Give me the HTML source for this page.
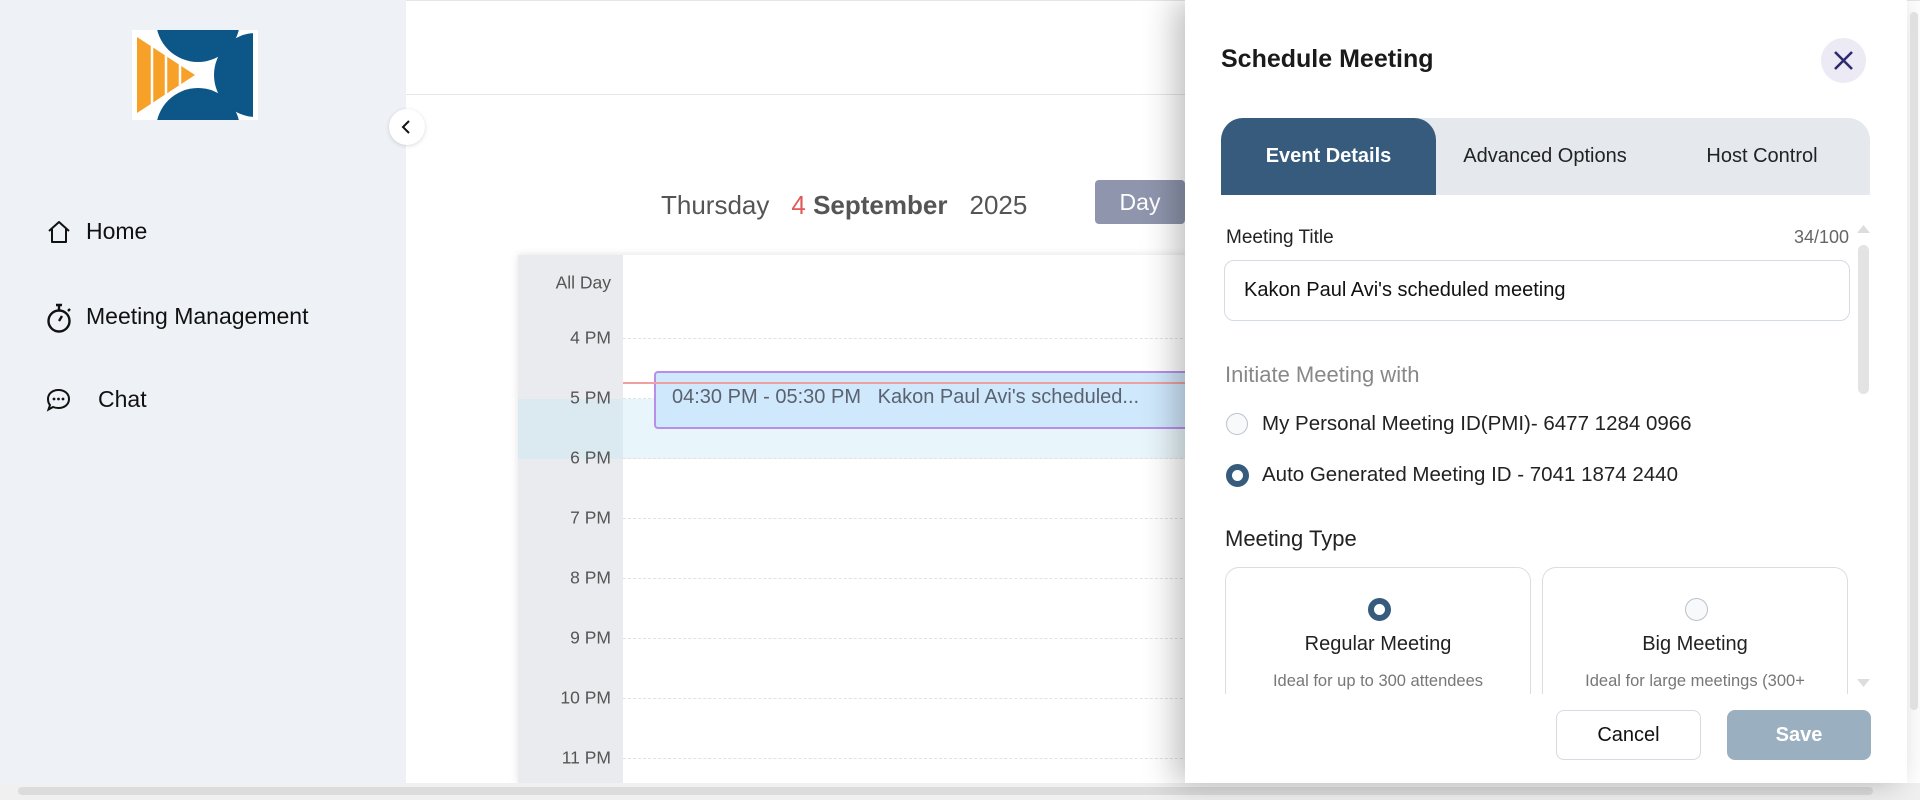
<!DOCTYPE html>
<html><head><meta charset="utf-8"><style>
*{box-sizing:border-box;margin:0;padding:0}
body{width:1920px;height:800px;overflow:hidden;background:#fff;font-family:"Liberation Sans",sans-serif;position:relative;color:#1a1a1a}
.abs{position:absolute}
.side{left:0;top:0;width:406px;height:800px;background:#eef1f5}
.nav{position:absolute;font-size:23px;color:#111;line-height:1}
.tl{position:absolute;right:0;width:105px;text-align:right;padding-right:12px;font-size:17.5px;color:#555;transform:translateY(-50%)}
.hl{position:absolute;left:105px;right:0;border-top:1px dashed #e2e2e2}
</style></head><body>
<div class="abs side"></div>
<svg class="abs" style="left:132px;top:30px" width="126" height="90" viewBox="0 0 126 90">
<rect width="126" height="90" fill="#fff"/>
<defs><clipPath id="c"><rect x="0" y="0" width="121" height="90"/></clipPath>
<clipPath id="t"><path d="M5 7 L5 83 L63 45Z"/></clipPath></defs>
<g clip-path="url(#c)" fill="#0c5688">
<circle cx="66" cy="-10" r="42"/><circle cx="66" cy="100" r="42"/>
<circle cx="124" cy="45" r="42"/>
</g>
<path d="M5 7 L5 83 L63 45Z" fill="#f7a128"/>
<g clip-path="url(#t)" stroke="#fff" stroke-width="2.5"><line x1="20" y1="0" x2="20" y2="90"/><line x1="34" y1="0" x2="34" y2="90"/><line x1="48" y1="0" x2="48" y2="90"/></g>
</svg>
<svg class="abs" style="left:47px;top:220px" width="24" height="24" viewBox="0 0 24 24" fill="none" stroke="#111" stroke-width="2" stroke-linejoin="round"><path d="M2 11 L12 2 L22 11 M5 9 V22 H19 V9"/></svg>
<div class="nav" style="left:86px;top:220px">Home</div>
<svg class="abs" style="left:46px;top:303px" width="26" height="30" viewBox="0 0 26 30" fill="none" stroke="#111" stroke-width="2.4"><circle cx="13" cy="18" r="10.5"/><path d="M10 2 H16 M13 2 V7 M13 18 L16 13 M22 8 L24 6"/></svg>
<div class="nav" style="left:86px;top:305px">Meeting Management</div>
<svg class="abs" style="left:46px;top:388px" width="25" height="24" viewBox="0 0 25 24" fill="none" stroke="#111" stroke-width="2"><path d="M12.5 2 C19 2 23 6 23 11 C23 16 19 20 12.5 20 C10 20 8.5 19.6 7 19 L2.5 21.5 L4 17 C2.5 15.4 2 13.4 2 11 C2 6 6 2 12.5 2Z"/><g fill="#111" stroke="none"><circle cx="8" cy="11" r="1.4"/><circle cx="12.5" cy="11" r="1.4"/><circle cx="17" cy="11" r="1.4"/></g></svg>
<div class="nav" style="left:98px;top:388px">Chat</div>

<div class="abs" style="left:406px;top:0;width:1514px;height:1px;background:#e6e6e6"></div>
<div class="abs" style="left:406px;top:94px;width:800px;height:1px;background:#e6e6e6"></div>
<div class="abs" style="left:389px;top:109px;width:36px;height:36px;border-radius:50%;background:#fff;box-shadow:0 1px 4px rgba(0,0,0,.15)"></div>
<svg class="abs" style="left:399px;top:119px" width="16" height="16" viewBox="0 0 16 16" fill="none" stroke="#111" stroke-width="2"><path d="M10 2 L4 8 L10 14"/></svg>

<div class="abs" style="left:661px;top:190px;font-size:26px;color:#555;white-space:nowrap">Thursday<span style="color:#e05a5a;margin-left:22px">4</span> <b style="color:#555">September</b><span style="margin-left:22px">2025</span></div>
<div class="abs" style="left:1095px;top:180px;width:90px;height:44px;background:#8e95ad;border-radius:4px;color:#fff;font-size:23px;text-align:center;line-height:44px">Day</div>

<div class="abs" style="left:518px;top:255px;width:700px;height:528px;background:#fff;box-shadow:0 0 8px rgba(0,0,0,.12)">
 <div class="abs" style="left:0;top:0;width:105px;height:528px;background:#e9ebee"></div>
 <div class="abs" style="left:0;top:144px;width:700px;height:60px;background:#e8f5fa"></div>
 <div class="abs" style="left:0;top:144px;width:105px;height:60px;background:#dbe9f0"></div>
 <div class="abs" style="left:105px;top:0;width:595px;height:45px;background:#fff"></div>
 <div class="tl" style="left:0;top:28px">All Day</div>
 <div class="hl" style="top:83px"></div><div class="tl" style="left:0;top:83px">4 PM</div>
 <div class="hl" style="top:143px"></div><div class="tl" style="left:0;top:143px">5 PM</div>
 <div class="hl" style="top:203px"></div><div class="tl" style="left:0;top:203px">6 PM</div>
 <div class="hl" style="top:263px"></div><div class="tl" style="left:0;top:263px">7 PM</div>
 <div class="hl" style="top:323px"></div><div class="tl" style="left:0;top:323px">8 PM</div>
 <div class="hl" style="top:383px"></div><div class="tl" style="left:0;top:383px">9 PM</div>
 <div class="hl" style="top:443px"></div><div class="tl" style="left:0;top:443px">10 PM</div>
 <div class="hl" style="top:503px"></div><div class="tl" style="left:0;top:503px">11 PM</div>
 <div class="abs" style="left:136px;top:116px;width:600px;height:58px;background:#cfe8fc;border:2px solid #b98ee8;border-radius:4px"></div>
 <div class="abs" style="left:105px;top:127px;width:600px;height:2px;background:#f0a0a0"></div>
 <div class="abs" style="left:154px;top:131px;font-size:20px;color:#5a6270;white-space:nowrap">04:30 PM - 05:30 PM &nbsp; Kakon Paul Avi's scheduled...</div>
</div>
<div class="abs" style="left:0;top:783px;width:1920px;height:17px;background:#f0f0f0"></div>
<div class="abs" style="left:18px;top:787px;width:1855px;height:8px;background:#dcdcdc;border-radius:4px"></div>

<div class="abs" style="left:1185px;top:0;width:722px;height:783px;background:#fff;box-shadow:-10px 0 30px rgba(0,0,0,.25)"></div>
<div class="abs" style="left:1221px;top:45px;font-size:25px;font-weight:bold;color:#1a1a1a">Schedule Meeting</div>
<div class="abs" style="left:1821px;top:38px;width:45px;height:45px;border-radius:50%;background:#ecebf5"></div>
<svg class="abs" style="left:1833px;top:50px" width="21" height="21" viewBox="0 0 21 21" stroke="#2d2a6e" stroke-width="2.6"><path d="M2 2 L19 19 M19 2 L2 19"/></svg>
<div class="abs" style="left:1221px;top:118px;width:649px;height:77px;background:#e5e9ed;border-radius:22px 22px 0 0"></div>
<div class="abs" style="left:1221px;top:118px;width:215px;height:77px;background:#365b7d;border-radius:22px 22px 0 0;color:#fff;font-weight:bold;font-size:20px;text-align:center;line-height:77px">Event Details</div>
<div class="abs" style="left:1436px;top:118px;width:218px;font-size:20px;text-align:center;line-height:77px;color:#222">Advanced Options</div>
<div class="abs" style="left:1654px;top:118px;width:216px;font-size:20px;text-align:center;line-height:77px;color:#222">Host Control</div>
<div class="abs" style="left:1226px;top:227px;font-size:19px;color:#222">Meeting Title</div>
<div class="abs" style="left:1760px;top:227px;width:89px;text-align:right;font-size:18px;color:#666">34/100</div>
<div class="abs" style="left:1224px;top:260px;width:626px;height:61px;border:1px solid #d5dbe3;border-radius:10px;font-size:20px;line-height:59px;padding-left:19px;color:#111">Kakon Paul Avi's scheduled meeting</div>
<div class="abs" style="left:1858px;top:245px;width:11px;height:149px;background:#e3e3e3;border-radius:6px"></div>
<svg class="abs" style="left:1857px;top:224px" width="13" height="10"><path d="M0 9 L6.5 1 L13 9Z" fill="#ddd"/></svg>
<svg class="abs" style="left:1857px;top:678px" width="13" height="10"><path d="M0 1 L6.5 9 L13 1Z" fill="#ddd"/></svg>
<div class="abs" style="left:1225px;top:362px;font-size:22px;color:#888">Initiate Meeting with</div>
<div class="abs" style="left:1226px;top:413px;width:22px;height:22px;border-radius:50%;border:1.5px solid #b8c2cc;background:#f7f9fb"></div>
<div class="abs" style="left:1262px;top:412px;font-size:20.5px;color:#222">My Personal Meeting ID(PMI)- 6477 1284 0966</div>
<div class="abs" style="left:1226px;top:464px;width:23px;height:23px;border-radius:50%;border:6px solid #365b7d;background:#fff"></div>
<div class="abs" style="left:1262px;top:463px;font-size:20.5px;color:#222">Auto Generated Meeting ID - 7041 1874 2440</div>
<div class="abs" style="left:1225px;top:526px;font-size:22px;color:#222">Meeting Type</div>
<div class="abs" style="left:1225px;top:567px;width:306px;height:140px;border:1px solid #ddd;border-radius:14px;text-align:center"></div>
<div class="abs" style="left:1542px;top:567px;width:306px;height:140px;border:1px solid #ddd;border-radius:14px"></div>
<div class="abs" style="left:1190px;top:694px;width:680px;height:20px;background:#fff"></div>
<div class="abs" style="left:1368px;top:598px;width:23px;height:23px;border-radius:50%;border:6px solid #365b7d;background:#fff"></div>
<div class="abs" style="left:1685px;top:598px;width:23px;height:23px;border-radius:50%;border:1.5px solid #b8c2cc;background:#f7f9fb"></div>
<div class="abs" style="left:1225px;top:633px;width:306px;text-align:center;font-size:20px;color:#222">Regular Meeting</div>
<div class="abs" style="left:1542px;top:633px;width:306px;text-align:center;font-size:20px;color:#222">Big Meeting</div>
<div class="abs" style="left:1225px;top:672px;width:306px;text-align:center;font-size:16.5px;color:#777">Ideal for up to 300 attendees</div>
<div class="abs" style="left:1542px;top:672px;width:306px;text-align:center;font-size:16.5px;color:#777">Ideal for large meetings (300+</div>
<div class="abs" style="left:1556px;top:710px;width:145px;height:50px;border:1px solid #d5dbe3;border-radius:8px;text-align:center;line-height:48px;font-size:20px;color:#111">Cancel</div>
<div class="abs" style="left:1727px;top:710px;width:144px;height:50px;background:#9aafc0;border-radius:8px;text-align:center;line-height:50px;font-size:20px;font-weight:bold;color:#fff">Save</div>
<div class="abs" style="left:1910px;top:12px;width:8px;height:698px;background:#e0e0e0;border-radius:4px"></div>
</body></html>
